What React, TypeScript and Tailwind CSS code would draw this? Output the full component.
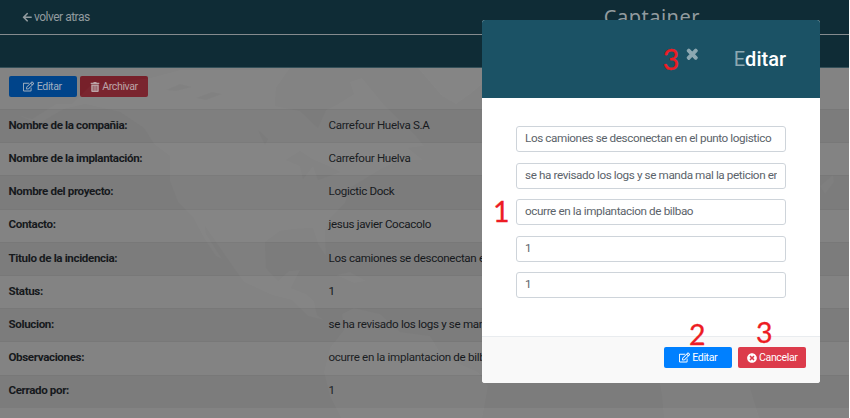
import type { ReactNode } from "react";
import { FaArrowLeft, FaRegEdit, FaTimes, FaTimesCircle, FaTrashAlt } from "react-icons/fa";

const rows: [string, string][] = [
  ["Nombre de la compañia:", "Carrefour Huelva S.A"],
  ["Nombre de la implantación:", "Carrefour Huelva"],
  ["Nombre del proyecto:", "Logictic Dock"],
  ["Contacto:", "jesus javier Cocacolo"],
  ["Titulo de la incidencia:", "Los camiones se desconectan en"],
  ["Status:", "1"],
  ["Solucion:", "se ha revisado los logs y se manda"],
  ["Observaciones:", "ocurre en la implantacion de bilbao"],
  ["Cerrado por:", "1"],
];

const fields = [
  "Los camiones se desconectan en el punto logistico",
  "se ha revisado los logs y se manda mal la peticion en",
  "ocurre en la implantacion de bilbao",
  "1",
  "1",
];

function Button({ className, children }: { className: string; children: ReactNode }) {
  return (
    <button className={`flex h-[21px] items-center justify-center gap-[2.5px] whitespace-nowrap rounded-[2px] text-[10.6px] tracking-[-0.4px] ${className}`}>
      {children}
    </button>
  );
}

function Mark({ className, children }: { className: string; children: ReactNode }) {
  return (
    <span className={`font-[Lato,sans-serif] text-[28.5px] leading-[36px] text-[#ed1c24] [-webkit-text-stroke:0.3px_#ed1c24] ${className}`}>
      {children}
    </span>
  );
}

function WorldMap() {
  return (
    <svg className="absolute inset-0 h-full w-full" viewBox="0 0 849 350" preserveAspectRatio="none" fill="#fff" fillOpacity="0.025" fillRule="evenodd">
      <path d="M18 47 32 51 56 36 72 36 90 18 150 10 180 2 250 2 290 0 276 20 275 38 300 43 318 60 326 42 338 36 354 26 350 14 362 10 385 38 404 56 416 68 424 78 408 80 423 92 400 92 381 101 350 120 345 135 329 151 325 164 326 188 318 176 313 160 294 161 280 163 265 174 266 200 278 213 289 203 300 202 291 220 306 226 314 233 317 247 324 252 308 248 292 232 272 227 244 214 236 203 218 177 205 158 206 166 222 191 216 188 204 170 193 149 178 134 170 113 170 88 154 76 144 60 120 44 85 36 64 41 38 56ZM286 92 300 83 312 91 328 98 340 104 318 112 313 98 303 111 300 98ZM258 62 268 71 265 77Z" />
      <path d="M342 246 354 240 380 246 400 264 430 268 442 288 478 304 488 318 482 352 342 352 330 328 324 304 330 280 344 262Z" />
      <path d="M418 0 482 0 482 16 470 26 456 36 442 28 430 14Z" />
      <path d="M336 207 350 204 366 213 354 215Z" />
      <path d="M658 304 662 328 664 352 760 352 750 320 752 304Z" />
      <path d="M820 118 833 107 834 114 825 126Z" />
      <path fill="#000" d="M166 22 180 16 192 19 176 23ZM196 30 212 24 222 26 206 32Z" />
    </svg>
  );
}

export default function App() {
  return (
    <div className="h-[418px] overflow-hidden bg-white font-[Roboto,'Liberation_Sans',sans-serif] text-[11.6px] text-[#16191c]">
      <div className="relative flex h-full w-[849px] flex-col bg-[#838383]">
        <header className="flex h-[35px] shrink-0 items-center justify-between border-b border-[#858b8e] bg-[#0f2c36] pl-[21.5px] pr-[149px] text-[#929b9f]">
          <a className="flex items-center gap-[2px] text-[12px] tracking-[-0.5px]">
            <FaArrowLeft size={10.5} />
            volver atras
          </a>
          <span className="font-['Noto_Sans',sans-serif] text-[20px] leading-none tracking-[0.5px]">Captainer</span>
        </header>
        <div className="h-[33px] shrink-0 border-b border-[#345059] bg-[#0f2c36]" />
        <main className="relative min-h-0 flex-1 overflow-hidden">
          <WorldMap />
          <div className="flex h-[41px] gap-[3px] pl-[8.5px] pt-[8px]">
            <Button className="w-[68px] bg-[#00448a] text-[#a1b0c0]"><FaRegEdit size={11} />Editar</Button>
            <Button className="w-[68.5px] bg-[#77202a] text-[#bba3a6]"><FaTrashAlt size={10} />Archivar</Button>
          </div>
          <div>
            {rows.map(([label, value]) => (
              <div key={label} className="flex h-[33.2px] items-center border-t border-[#787878] pb-px pl-[8.5px] tracking-[-0.32px] odd:bg-black/5">
                <span className="w-[320px] font-bold tracking-[-0.37px]">{label}</span>
                <span className="whitespace-nowrap">{value}</span>
              </div>
            ))}
          </div>
        </main>

        <section className="absolute left-[482px] top-[20px] flex h-[362.5px] w-[338px] flex-col overflow-hidden rounded-[3px] bg-white">
          <header className="flex h-[78px] shrink-0 items-center justify-end bg-[#1b5265] pr-[34px] text-[20px] text-white">
            <Mark className="mr-[6px] pb-px">3</Mark>
            <FaTimes size={14.5} className="mb-[10px] mr-[34px] text-[#8da8b2]" stroke="currentColor" strokeWidth={42} />
            <h2 className="font-medium"><span className="font-normal text-[#8da8b2]">E</span>ditar</h2>
          </header>
          <div className="relative flex flex-1 flex-col gap-[10.5px] border-b border-[#e9ecef] px-[34px] pt-[28px]">
            {fields.map((value, i) => (
              <div key={i} className="flex h-[26px] w-[270px] items-center rounded-[3px] border border-[#ced4da] px-[8px] text-[11.7px] tracking-[-0.39px] text-[#5b636a]">
                <span className="w-full overflow-hidden whitespace-nowrap">{value}</span>
              </div>
            ))}
            <Mark className="absolute left-[11px] top-[95px]">1</Mark>
            <Mark className="absolute left-[207px] top-[218px]">2</Mark>
            <Mark className="absolute left-[274px] top-[216px]">3</Mark>
          </div>
          <footer className="flex h-[46px] shrink-0 items-center justify-end gap-[6px] bg-[#f9f9f9] pb-[4px] pr-[14px] text-white">
            <Button className="w-[68px] bg-[#0080ff]"><FaRegEdit size={11} />Editar</Button>
            <Button className="w-[68px] bg-[#dc3b4b]"><FaTimesCircle size={10} />Cancelar</Button>
          </footer>
        </section>
      </div>
    </div>
  );
}
